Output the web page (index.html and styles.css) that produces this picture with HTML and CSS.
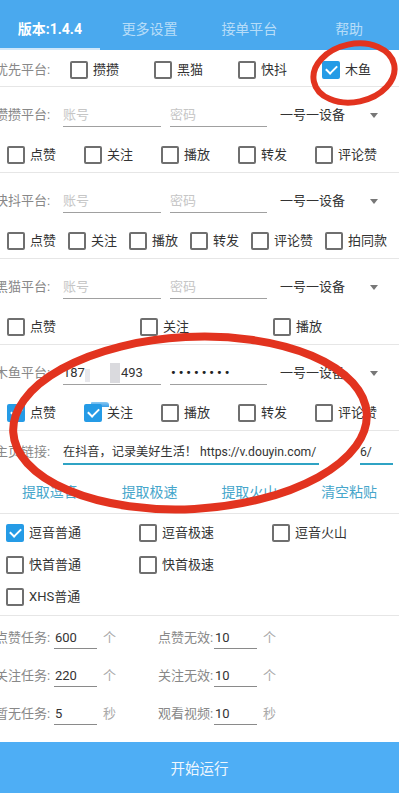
FILE: index.html
```html
<!DOCTYPE html>
<html lang="zh-CN">
<head>
<meta charset="utf-8">
<title>设置</title>
<link rel="stylesheet" href="styles.css">
</head>
<body>
<div class="page">
  <nav class="tabs">
    <div class="tab active">版本:1.4.4</div>
    <div class="tab">更多设置</div>
    <div class="tab">接单平台</div>
    <div class="tab">帮助</div>
  </nav>

  <section class="prio">
    <span class="label">优先平台:</span>
    <label class="cb"><i class="box"></i>攒攒</label>
    <label class="cb"><i class="box"></i>黑猫</label>
    <label class="cb"><i class="box"></i>快抖</label>
    <label class="cb"><i class="box on"></i>木鱼</label>
  </section>

  <section class="platform">
    <div class="inrow">
      <span class="label">攒攒平台:</span>
      <span class="field f1 ph">账号</span>
      <span class="field f2 ph">密码</span>
      <span class="spinner">一号一设备</span>
      <i class="tri"></i>
    </div>
    <div class="cbrow five">
      <label class="cb"><i class="box"></i>点赞</label>
      <label class="cb"><i class="box"></i>关注</label>
      <label class="cb"><i class="box"></i>播放</label>
      <label class="cb"><i class="box"></i>转发</label>
      <label class="cb"><i class="box"></i>评论赞</label>
    </div>
  </section>

  <section class="platform">
    <div class="inrow">
      <span class="label">快抖平台:</span>
      <span class="field f1 ph">账号</span>
      <span class="field f2 ph">密码</span>
      <span class="spinner">一号一设备</span>
      <i class="tri"></i>
    </div>
    <div class="cbrow six">
      <label class="cb"><i class="box"></i>点赞</label>
      <label class="cb"><i class="box"></i>关注</label>
      <label class="cb"><i class="box"></i>播放</label>
      <label class="cb"><i class="box"></i>转发</label>
      <label class="cb"><i class="box"></i>评论赞</label>
      <label class="cb"><i class="box"></i>拍同款</label>
    </div>
  </section>

  <section class="platform">
    <div class="inrow">
      <span class="label">黑猫平台:</span>
      <span class="field f1 ph">账号</span>
      <span class="field f2 ph">密码</span>
      <span class="spinner">一号一设备</span>
      <i class="tri"></i>
    </div>
    <div class="cbrow three">
      <label class="cb"><i class="box"></i>点赞</label>
      <label class="cb"><i class="box"></i>关注</label>
      <label class="cb"><i class="box"></i>播放</label>
    </div>
  </section>

  <section class="platform">
    <div class="inrow">
      <span class="label">木鱼平台:</span>
      <span class="field f1 acc">187<i class="blur b1"></i><i class="blur b2"></i>493</span>
      <span class="field f2 pwd">••••••••</span>
      <span class="spinner">一号一设备</span>
      <i class="tri"></i>
    </div>
    <div class="cbrow five">
      <label class="cb"><i class="box on"></i>点赞</label>
      <label class="cb flag"><i class="box on"></i>关注</label>
      <label class="cb"><i class="box"></i>播放</label>
      <label class="cb"><i class="box"></i>转发</label>
      <label class="cb"><i class="box"></i>评论赞</label>
    </div>
  </section>

  <section class="links">
    <div class="linkrow">
      <span class="label">主页链接:</span>
      <span class="lfield l1">在抖音，记录美好生活！ https://v.douyin.com/</span>
      <span class="lfield l2">6/</span>
    </div>
    <div class="btnrow">
      <span class="tbtn">提取逗音</span>
      <span class="tbtn">提取极速</span>
      <span class="tbtn">提取火山</span>
      <span class="tbtn">清空粘贴</span>
    </div>
  </section>

  <section class="modes">
    <label class="cb"><i class="box on"></i>逗音普通</label>
    <label class="cb"><i class="box"></i>逗音极速</label>
    <label class="cb"><i class="box"></i>逗音火山</label>
    <label class="cb"><i class="box"></i>快首普通</label>
    <label class="cb"><i class="box"></i>快首极速</label>
    <span></span>
    <label class="cb"><i class="box"></i>XHS普通</label>
  </section>

  <section class="tasks">
    <div class="trow">
      <div class="grp g1"><span class="tlabel">点赞任务:</span><span class="num">600</span><span class="unit">个</span></div>
      <div class="grp g2"><span class="tlabel">点赞无效:</span><span class="num">10</span><span class="unit">个</span></div>
    </div>
    <div class="trow">
      <div class="grp g1"><span class="tlabel">关注任务:</span><span class="num">220</span><span class="unit">个</span></div>
      <div class="grp g2"><span class="tlabel">关注无效:</span><span class="num">10</span><span class="unit">个</span></div>
    </div>
    <div class="trow">
      <div class="grp g1"><span class="tlabel">暂无任务:</span><span class="num">5</span><span class="unit">秒</span></div>
      <div class="grp g2"><span class="tlabel">观看视频:</span><span class="num">10</span><span class="unit">秒</span></div>
    </div>
  </section>

  <button class="start">开始运行</button>
</div>

<svg class="marks" width="399" height="793" viewBox="0 0 399 793">
  <ellipse cx="354" cy="73" rx="41" ry="29" transform="rotate(-12 354 73)" fill="none" stroke="#e2331f" stroke-width="6"/>
  <ellipse cx="190" cy="423" rx="177" ry="86" transform="rotate(-3 190 423)" fill="none" stroke="#e2331f" stroke-width="8"/>
</svg>
</body>
</html>
```

FILE: styles.css
```css
* { box-sizing: border-box; }
html, body { margin: 0; padding: 0; }
body {
  width: 399px;
  height: 793px;
  overflow: hidden;
  position: relative;
  background: #fff;
  color: #333;
  font-family: Roboto, "Noto Sans CJK SC", sans-serif;
  font-size: 13px;
  line-height: 20px;
}
.page { display: flex; flex-direction: column; width: 399px; }

.tabs {
  display: grid;
  grid-template-columns: repeat(4, 1fr);
  height: 50px;
  background: #4aa9ee;
}
.tab {
  display: flex;
  align-items: center;
  justify-content: center;
  padding-top: 7px;
  font-size: 14px;
  color: rgba(255,255,255,0.62);
}
.tab.active {
  color: #fff;
  font-weight: bold;
  box-shadow: inset 0 -2px 0 #cfe7fa;
}

.label {
  flex: 0 0 68px;
  margin-left: -5px;
  color: #888;
  white-space: nowrap;
}

.cb {
  position: relative;
  display: flex;
  align-items: center;
  gap: 5px;
  color: #333;
  white-space: nowrap;
}
.box {
  position: relative;
  flex: 0 0 18px;
  width: 18px;
  height: 18px;
  border: 2px solid #6f6f6f;
  border-radius: 2px;
}
.box.on { background: #259be6; border-color: #259be6; }
.box.on::after {
  content: "";
  position: absolute;
  left: 2px;
  top: 2px;
  width: 9px;
  height: 5px;
  border-left: 2px solid #fff;
  border-bottom: 2px solid #fff;
  transform: rotate(-45deg);
}

.prio {
  display: flex;
  align-items: center;
  height: 37px;
  padding-top: 4px;
  border-bottom: 1px solid #e6e6e6;
}
.prio .cb { flex: 1 1 0; padding-left: 7px; }

.platform {
  height: 86px;
  border-bottom: 1px solid #e6e6e6;
  display: flex;
  flex-direction: column;
}
.inrow {
  display: flex;
  align-items: flex-start;
  height: 50px;
  padding-top: 18px;
}
.field {
  height: 22px;
  line-height: 20px;
  border-bottom: 1px solid #a0a0a0;
  white-space: nowrap;
  overflow: hidden;
}
.f1 { flex: 0 0 98px; margin-right: 9px; }
.f2 { flex: 0 0 97px; margin-right: 13px; }
.ph { color: #c6c6c6; }
.acc { color: #333; }
.blur { display: inline-block; vertical-align: top; }
.b1 { width: 5px; height: 13px; margin-top: 6px; background: #e8e8ec; margin-right: 20px; }
.b2 { width: 10px; height: 20px; background: #dadade; margin-right: 1px; }
.pwd { color: #222; letter-spacing: 3px; font-weight: bold; padding-left: 1px; }
.spinner { color: #333; white-space: nowrap; }
.tri {
  margin-left: auto;
  margin-right: 21px;
  margin-top: 8px;
  width: 0;
  height: 0;
  border-left: 4px solid transparent;
  border-right: 4px solid transparent;
  border-top: 5px solid #777;
}

.cbrow { display: flex; align-items: center; height: 35px; }
.five { padding-left: 7px; }
.five .cb { flex: 0 0 77px; }
.six { padding-left: 7px; gap: 12px; }
.three .cb { flex: 1 1 0; padding-left: 7px; }
.flag::before {
  content: "";
  position: absolute;
  left: 7px;
  top: -1px;
  width: 18px;
  height: 5px;
  border-radius: 1px 3px 0 0;
  background: linear-gradient(#8ccaf3, #3a9de6);
}

.links {
  height: 83px;
  border-bottom: 1px solid #e6e6e6;
  display: flex;
  flex-direction: column;
}
.linkrow {
  display: flex;
  align-items: flex-start;
  height: 39px;
  padding-top: 11px;
}
.lfield {
  height: 23px;
  line-height: 20px;
  border-bottom: 2px solid #2fa3c4;
  white-space: nowrap;
  overflow: hidden;
  font-size: 12.2px;
  color: #333;
}
.l1 { flex: 0 0 256px; }
.l2 { flex: 0 0 33px; margin-left: 41px; }
.btnrow {
  display: grid;
  grid-template-columns: repeat(4, 1fr);
  align-items: center;
  height: 43px;
}
.tbtn {
  text-align: center;
  font-size: 14px;
  color: #46a6cb;
}

.modes {
  display: grid;
  grid-template-columns: repeat(3, 1fr);
  grid-auto-rows: 32px;
  padding: 3px 0 2px;
  height: 102px;
  border-bottom: 1px solid #e6e6e6;
}
.modes .cb { padding-left: 6px; }

.tasks {
  display: flex;
  flex-direction: column;
  padding: 3px 0 9px;
  height: 126px;
}
.trow { display: flex; align-items: center; height: 38px; }
.grp { display: flex; align-items: center; }
.g1 { flex: 0 0 163px; margin-left: -5px; }
.g1 .tlabel { flex: 0 0 59px; }
.g2 .tlabel { flex: 0 0 56px; }
.tlabel { color: #888; white-space: nowrap; }
.num {
  flex: 0 0 43px;
  height: 22px;
  line-height: 21px;
  padding-left: 1px;
  border-bottom: 1px solid #8a8a8a;
  color: #333;
}
.unit { margin-left: 6px; color: #aaa; }

.start {
  display: block;
  width: 399px;
  height: 51px;
  margin: 0;
  border: 0;
  padding: 0;
  background: #4eaef5;
  color: #eef7fe;
  font-family: Roboto, "Noto Sans CJK SC", sans-serif;
  font-size: 14.5px;
}

.marks {
  position: absolute;
  left: 0;
  top: 0;
  pointer-events: none;
}
```
